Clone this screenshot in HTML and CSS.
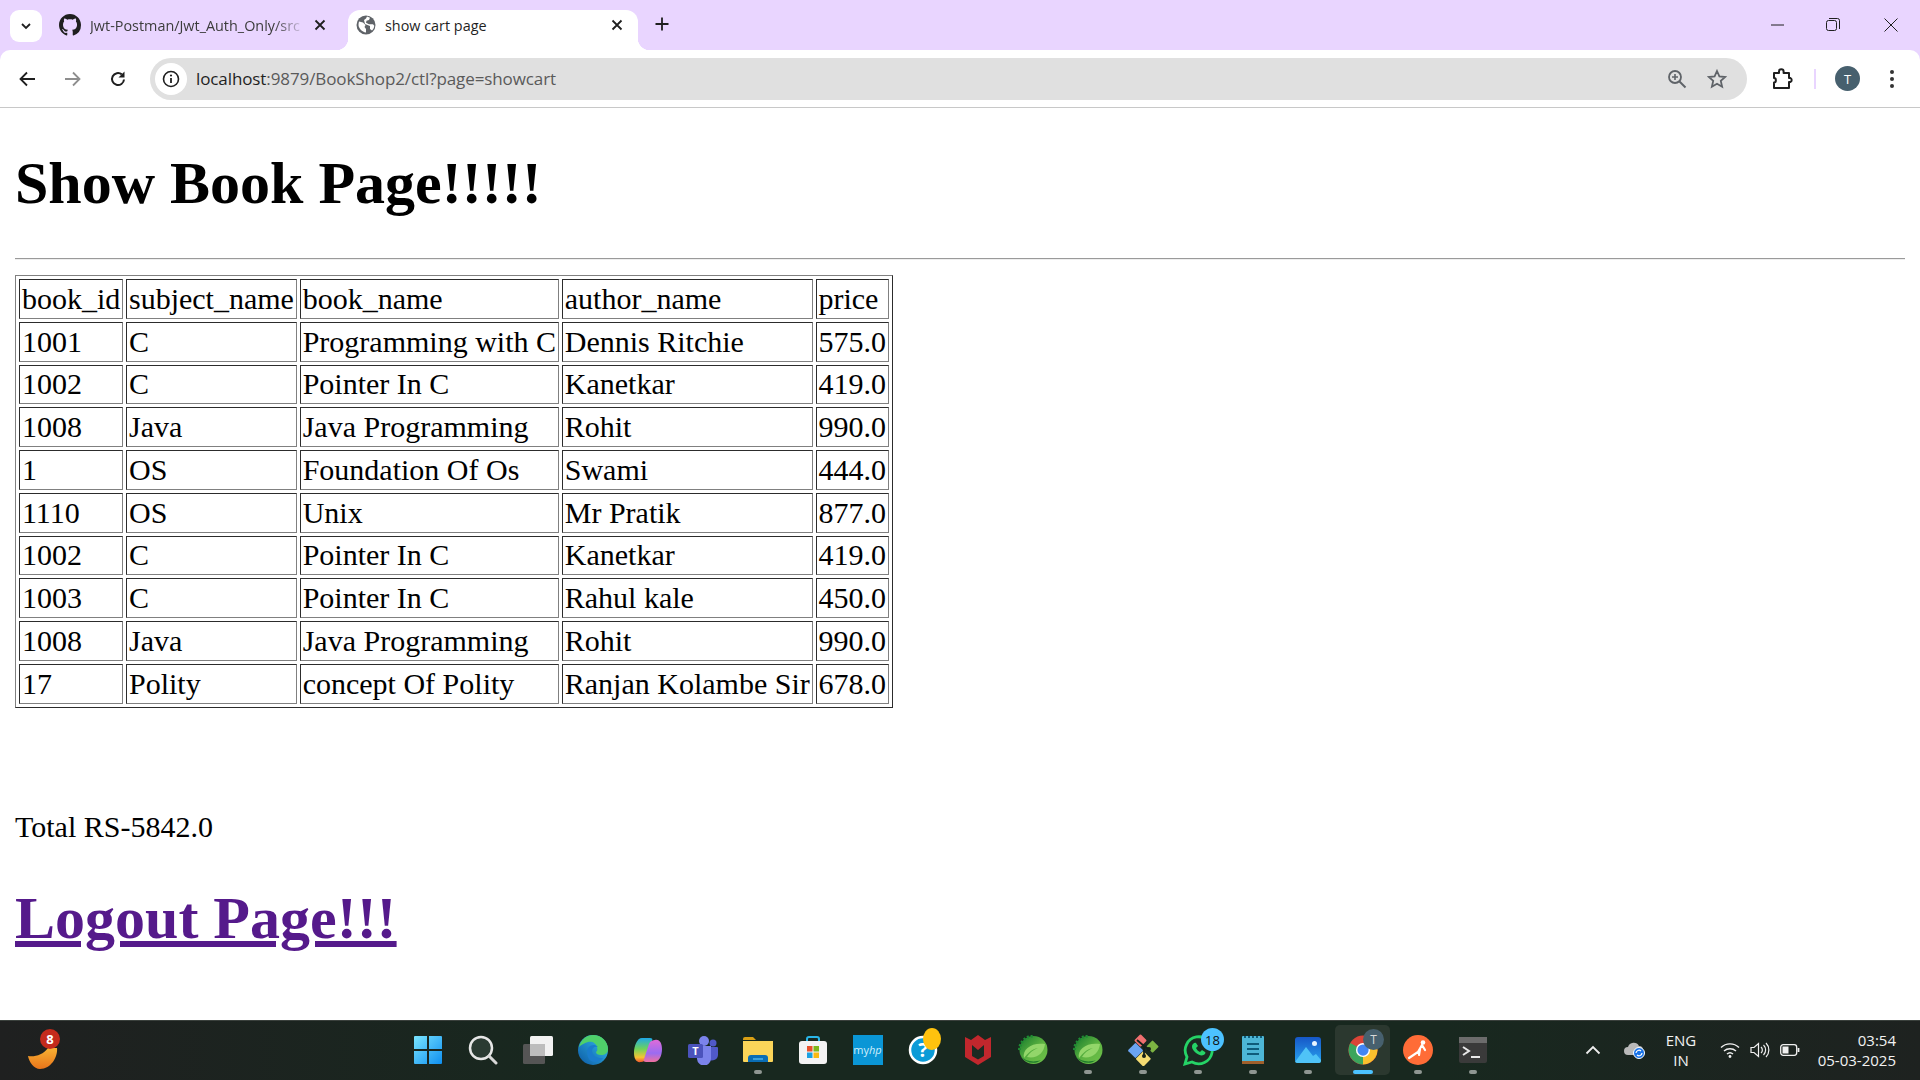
FILE: index.html
```html
<!DOCTYPE html>
<html>
    <head>
        <meta charset="UTF-8">
        <title>show cart page</title>
        <link rel="stylesheet" href="styles.css">
    </head>
    <body>
        <div class="tabstrip">
            <div class="tab-search"><svg width="14" height="14" viewBox="0 0 14 14"><path d="M3 5l4 4 4-4" fill="none" stroke="#1f1f1f" stroke-width="1.8"/></svg></div>
            <div class="tab inactive">
                <svg class="favicon" width="22" height="22" viewBox="0 0 16 16"><path fill="#1f1f1f" d="M8 0C3.58 0 0 3.58 0 8c0 3.54 2.29 6.53 5.47 7.59.4.07.55-.17.55-.38 0-.19-.01-.82-.01-1.49-2.01.37-2.53-.49-2.69-.94-.09-.23-.48-.94-.82-1.13-.28-.15-.68-.52-.01-.53.63-.01 1.08.58 1.23.82.72 1.21 1.87.87 2.33.66.07-.52.28-.87.51-1.07-1.78-.2-3.64-.89-3.64-3.95 0-.87.31-1.59.82-2.15-.08-.2-.36-1.02.08-2.12 0 0 .67-.21 2.2.82.64-.18 1.32-.27 2-.27s1.36.09 2 .27c1.53-1.04 2.2-.82 2.2-.82.44 1.1.16 1.92.08 2.12.51.56.82 1.27.82 2.15 0 3.07-1.87 3.75-3.65 3.95.29.25.54.73.54 1.48 0 1.07-.01 1.93-.01 2.2 0 .21.15.46.55.38A8.01 8.01 0 0 0 16 8c0-4.42-3.58-8-8-8z"/></svg>
                <span class="tab-title fade">Jwt-Postman/Jwt_Auth_Only/src</span>
                <svg class="tab-close" width="12" height="12" viewBox="0 0 12 12"><path d="M1.5 1.5l9 9M10.5 1.5l-9 9" stroke="#1f1f1f" stroke-width="1.8"/></svg>
            </div>
            <div class="tab active">
                <svg class="favicon" width="20" height="20" viewBox="0 0 20 20"><circle cx="10" cy="10" r="9.5" fill="#5f6368"/><path fill="#fff" d="M3 6.5l4 1 2.5 2.5-1 2 1.500 2v3.500C6 17 2.500 13 2.500 10c0-1 .2-2.500.5-3.500zM11 1.500l3 1.200-1 2.300-2.500.8-.5 2 3 1.500h4l1.300 1.500c-.3 2-1 3.500-2.300 4.700l-2-1.500V11L9 9 8 5l2-1.500z"/></svg>
                <span class="tab-title">show cart page</span>
                <svg class="tab-close" width="12" height="12" viewBox="0 0 12 12"><path d="M1.5 1.5l9 9M10.5 1.5l-9 9" stroke="#1f1f1f" stroke-width="1.8"/></svg>
            </div>
            <svg class="new-tab" width="16" height="16" viewBox="0 0 16 16"><path d="M8 1.5v13M1.5 8h13" stroke="#1f1f1f" stroke-width="1.8"/></svg>
            <div class="window-controls">
                <svg width="14" height="14" viewBox="0 0 14 14"><path d="M0 7h13" stroke="#1f1f1f" stroke-width="1"/></svg>
                <svg width="14" height="14" viewBox="0 0 14 14"><rect x=".5" y="2.5" width="10" height="10" rx="2" fill="none" stroke="#1f1f1f"/><path d="M3 .5h8.500a2 2 0 0 1 2 2V11" fill="none" stroke="#1f1f1f"/></svg>
                <svg class="window-close" width="14" height="14" viewBox="0 0 14 14"><path d="M.5.5l13 13M13.500.5l-13 13" stroke="#1f1f1f" stroke-width="1"/></svg>
            </div>
        </div>

        <div class="toolbar">
            <div class="nav-buttons">
                <svg width="18" height="18" viewBox="0 0 18 18"><path d="M17 9H3M9 2.500L2.500 9 9 15.500" fill="none" stroke="#1f1f1f" stroke-width="1.8"/></svg>
                <svg width="18" height="18" viewBox="0 0 18 18"><path d="M1 9h14M9 2.500L15.500 9 9 15.500" fill="none" stroke="#8e8e8e" stroke-width="1.8"/></svg>
                <svg class="reload" width="18" height="18" viewBox="0 0 18 18"><path d="M15 9.500A6 6 0 1 1 12.800 4.400" fill="none" stroke="#1f1f1f" stroke-width="2"/><path d="M15.500 1.500v6h-6z" fill="#1f1f1f"/></svg>
            </div>
            <div class="omnibox">
                <div class="site-info"><svg width="18" height="18" viewBox="0 0 18 18"><circle cx="9" cy="9" r="7.5" fill="none" stroke="#1f1f1f" stroke-width="1.6"/><path d="M9 8v5" stroke="#1f1f1f" stroke-width="1.8"/><circle cx="9" cy="5.5" r="1.1" fill="#1f1f1f"/></svg></div>
                <div class="url"><span class="host">localhost</span>:9879/BookShop2/ctl?page=showcart</div>
                <svg class="omni-icon" width="20" height="20" viewBox="0 0 20 20"><circle cx="8" cy="8" r="6" fill="none" stroke="#5f6368" stroke-width="1.8"/><path d="M12.500 12.500l6 6" stroke="#5f6368" stroke-width="2"/><path d="M8 5v6M5 8h6" stroke="#5f6368" stroke-width="1.6"/></svg>
                <svg class="omni-icon" width="20" height="20" viewBox="0 0 20 20"><path d="M10 2l2.400 5.400 5.800.6-4.400 3.900 1.300 5.800-5.100-3-5.100 3 1.300-5.800L1.800 8l5.800-.6z" fill="none" stroke="#5f6368" stroke-width="1.8"/></svg>
            </div>
            <svg class="ext-icon" width="22" height="22" viewBox="0 0 22 22"><path d="M3 5h5V3.500a2.300 2.300 0 0 1 4.600 0V5H18v5h1.500a2.300 2.300 0 0 1 0 4H18v6H3v-5.500c2.500 0 2.500-4.500 0-4.500z" fill="none" stroke="#1f1f1f" stroke-width="2" stroke-linejoin="round"/></svg>
            <div class="toolbar-divider"></div>
            <div class="avatar">T</div>
            <svg class="menu-icon" width="6" height="20" viewBox="0 0 6 20"><circle cx="3" cy="3" r="2" fill="#333"/><circle cx="3" cy="10" r="2" fill="#333"/><circle cx="3" cy="17" r="2" fill="#333"/></svg>
        </div>

        <div class="page">
            <h1>Show Book Page!!!!!</h1>
            <hr>
            <table class="cart" border="1">
                <tr><td>book_id</td><td>subject_name</td><td>book_name</td><td>author_name</td><td>price</td></tr>
                <tr><td>1001</td><td>C</td><td>Programming with C</td><td>Dennis Ritchie</td><td>575.0</td></tr>
                <tr><td>1002</td><td>C</td><td>Pointer In C</td><td>Kanetkar</td><td>419.0</td></tr>
                <tr><td>1008</td><td>Java</td><td>Java Programming</td><td>Rohit</td><td>990.0</td></tr>
                <tr><td>1</td><td>OS</td><td>Foundation Of Os</td><td>Swami</td><td>444.0</td></tr>
                <tr><td>1110</td><td>OS</td><td>Unix</td><td>Mr Pratik</td><td>877.0</td></tr>
                <tr><td>1002</td><td>C</td><td>Pointer In C</td><td>Kanetkar</td><td>419.0</td></tr>
                <tr><td>1003</td><td>C</td><td>Pointer In C</td><td>Rahul kale</td><td>450.0</td></tr>
                <tr><td>1008</td><td>Java</td><td>Java Programming</td><td>Rohit</td><td>990.0</td></tr>
                <tr><td>17</td><td>Polity</td><td>concept Of Polity</td><td>Ranjan Kolambe Sir</td><td>678.0</td></tr>
            </table>
            <p class="total">Total RS-5842.0</p>
            <h1><a href="#">Logout Page!!!</a></h1>
        </div>

        <div class="taskbar">
            <div class="task-left">
                <div class="task-item">
                    <svg width="30" height="22" viewBox="0 0 30 22"><defs><linearGradient id="fx" x1="0" y1="0" x2="0" y2="1"><stop offset="0" stop-color="#f9b233"/><stop offset="1" stop-color="#e8741a"/></linearGradient></defs><path d="M0 8c7 1 15-1 20-8h9c1 9-6 21-17 21C6 21 1 14 0 8z" fill="url(#fx)"/></svg>
                    <span class="badge red">8</span>
                </div>
            </div>
            <div class="task-center">
                <div class="task-item"><svg width="30" height="30" viewBox="0 0 30 30"><defs><linearGradient id="win" x1="0" y1="0" x2="1" y2="1"><stop offset="0" stop-color="#7ae5ff"/><stop offset="1" stop-color="#0f8ff0"/></linearGradient></defs><path fill="url(#win)" d="M1 2a1 1 0 0 1 1-1h12v13H1zM16 1h12a1 1 0 0 1 1 1v12H16zM1 16h13v13H2a1 1 0 0 1-1-1zM16 16h13v12a1 1 0 0 1-1 1H16z"/></svg></div>
                <div class="task-item"><svg width="30" height="30" viewBox="0 0 30 30"><circle cx="13" cy="13" r="11" fill="#2a3a32" stroke="#e6e6e6" stroke-width="2.5"/><path d="M21 21l7 7" stroke="#d8d8d8" stroke-width="3" stroke-linecap="round"/></svg></div>
                <div class="task-item"><svg width="32" height="30" viewBox="0 0 32 30"><rect x="1" y="9" width="22" height="20" rx="1.5" fill="#555"/><rect x="8" y="1" width="23" height="20" rx="1.5" fill="#f2f2f2"/><rect x="8" y="9" width="15" height="12" fill="#bdbdbd"/></svg></div>
                <div class="task-item"><svg width="32" height="32" viewBox="0 0 32 32"><defs><linearGradient id="edge" x1="0" y1="1" x2="1" y2="0"><stop offset="0" stop-color="#0c59a4"/><stop offset="1" stop-color="#35c1f1"/></linearGradient></defs><circle cx="16" cy="16" r="15" fill="url(#edge)"/><path d="M2 13C4 5 10 1 16 1c8 0 15 6 15 14 0 4-3 6-7 6-3 0-5-1-5-3 1-1 2-2 1-5-1-4-5-6-9-5-4 1-7 3-9 5z" fill="#4fd06a"/><path d="M10 18c0-4 3-7 7-7 2 0 3 1 4 2-2-1-6 0-6 4 0 4 5 8 11 7-3 4-8 5-12 3-3-2-4-6-4-9z" fill="#1a7ccc"/></svg></div>
                <div class="task-item"><svg width="30" height="26" viewBox="0 0 30 26"><defs><linearGradient id="co1" x1="0" y1="0" x2="0" y2="1"><stop offset="0" stop-color="#1fa8e8"/><stop offset=".45" stop-color="#6fd35a"/><stop offset=".8" stop-color="#f7c433"/><stop offset="1" stop-color="#f0562f"/></linearGradient><linearGradient id="co2" x1="0" y1="0" x2="0" y2="1"><stop offset="0" stop-color="#e06bd8"/><stop offset=".6" stop-color="#9a6cf2"/><stop offset="1" stop-color="#f0709f"/></linearGradient></defs><path d="M9 1h8c2 0 3 1 2 3l-6 17c-1 3-3 4-5 4-5 1-7-4-7-9C1 9 4 1 9 1z" fill="url(#co1)"/><path d="M21 25h-8c-2 0-3-1-2-3l5-15c1-3 4-4 6-4 5-1 7 4 7 9 0 7-3 13-8 13z" fill="url(#co2)"/></svg></div>
                <div class="task-item"><svg width="32" height="30" viewBox="0 0 32 30"><circle cx="17" cy="6" r="5" fill="#7b83eb"/><circle cx="26" cy="8" r="3.5" fill="#5059c9"/><path d="M21 12h9a1 1 0 0 1 1 1v7a6 6 0 0 1-10 4z" fill="#5059c9"/><path d="M9 11h15v12a7 7 0 0 1-14 1z" fill="#7b83eb"/><rect x="1" y="9" width="15" height="14" rx="1.5" fill="#4b53bc"/><text x="8.5" y="20" class="teams-t">T</text></svg></div>
                <div class="task-item running"><svg width="32" height="30" viewBox="0 0 32 30"><path d="M1 4a2 2 0 0 1 2-2h8l3 3h-13z" fill="#d9a015"/><path d="M1 6h30v20a1 1 0 0 1-1 1H2a1 1 0 0 1-1-1z" fill="#fbd559"/><path d="M6 27v-4a3 3 0 0 1 3-3h14a3 3 0 0 1 3 3v4z" fill="#0a6db5"/><path d="M11 24h10" stroke="#4db3ea" stroke-width="1.5"/></svg></div>
                <div class="task-item"><svg width="30" height="30" viewBox="0 0 30 30"><path d="M9 7V4a2 2 0 0 1 2-2h8a2 2 0 0 1 2 2v3" fill="none" stroke="#29b6e8" stroke-width="2"/><rect x="1" y="6" width="28" height="23" rx="3" fill="#f3f3f3"/><rect x="9" y="11" width="5.5" height="5.5" fill="#e8512b"/><rect x="15.5" y="11" width="5.5" height="5.5" fill="#7db81c"/><rect x="9" y="17.5" width="5.5" height="5.5" fill="#1ba1e2"/><rect x="15.5" y="17.5" width="5.5" height="5.5" fill="#fbb911"/></svg></div>
                <div class="task-item"><div class="myhp">my<i>hp</i></div></div>
                <div class="task-item"><svg width="30" height="30" viewBox="0 0 30 30"><circle cx="15" cy="15" r="13" fill="#0b9bd7" stroke="#fff" stroke-width="2.5"/><text x="15" y="22" class="help-q">?</text></svg><span class="dot-badge"></span></div>
                <div class="task-item"><svg width="28" height="32" viewBox="0 0 28 32"><path d="M1 3l6 3 7-5 7 5 6-3v20l-13 8-13-8z" fill="#c1272d"/><path d="M8 11l6 5 6-5v11l-6 3.5L8 22z" fill="#1b2a22"/></svg></div>
                <div class="task-item"><svg width="30" height="30" viewBox="0 0 30 30"><defs><linearGradient id="spr" x1="0" y1="0" x2="1" y2="1"><stop offset="0" stop-color="#157a2c"/><stop offset=".55" stop-color="#5eb441"/><stop offset="1" stop-color="#6fc24a"/></linearGradient></defs><circle cx="15.5" cy="15" r="14" fill="url(#spr)"/><path d="M1.500 15A14 14 0 0 1 15.500 1" fill="none" stroke="#1f8a33" stroke-width="3" stroke-dasharray="2 1.800"/><path d="M6 23C4 14 14 7 27 9c-1 9-8 15-18 13 2-4 6-7 11-9-6 1-10 5-14 10z" fill="#93d66a"/><path d="M3 22c5 4 12 6 20 3-6 5-15 3-20-3z" fill="#1f7a2c"/></svg></div>
                <div class="task-item running"><svg width="30" height="30" viewBox="0 0 30 30"><circle cx="15.5" cy="15" r="14" fill="url(#spr)"/><path d="M1.500 15A14 14 0 0 1 15.500 1" fill="none" stroke="#1f8a33" stroke-width="3" stroke-dasharray="2 1.800"/><path d="M6 23C4 14 14 7 27 9c-1 9-8 15-18 13 2-4 6-7 11-9-6 1-10 5-14 10z" fill="#93d66a"/><path d="M3 22c5 4 12 6 20 3-6 5-15 3-20-3z" fill="#1f7a2c"/></svg></div>
                <div class="task-item running"><svg width="32" height="32" viewBox="0 0 32 32"><rect x="9" y="2" width="9" height="9" rx="1" transform="rotate(45 13.500 6.500)" fill="#ef6f6f"/><rect x="19" y="6" width="9" height="9" rx="1" transform="rotate(45 22 14)" fill="#7cb342"/><rect x="3" y="11" width="11" height="11" rx="1" transform="rotate(45 8.500 16.500)" fill="#6ba4f2"/><rect x="11" y="19" width="11" height="11" rx="1" transform="rotate(45 16 24.500)" fill="#f5dc72"/><path d="M10 6l7 6v10M17 12l5 3" fill="none" stroke="#15201a" stroke-width="1.800"/><circle cx="17" cy="22" r="2" fill="#15201a"/><circle cx="22" cy="15" r="2" fill="#15201a"/></svg></div>
                <div class="task-item running"><svg width="32" height="32" viewBox="0 0 32 32"><path d="M3 30l2-7a13.5 13.5 0 1 1 5 5z" fill="#1b2a22" stroke="#25d366" stroke-width="2.8"/><path d="M11 10c-2 2-1 6 3 9s7 3 9 1c.5-1 .5-2 0-2l-3-2-2 2c-2-1-3-2-4-4l2-2-2-3c-1-.5-2 0-3 1z" fill="#25d366"/></svg><span class="badge blue">18</span></div>
                <div class="task-item running"><svg width="24" height="32" viewBox="0 0 24 32"><rect x="1" y="2" width="22" height="28" rx="1" fill="#4db6d6"/><rect x="1" y="27" width="22" height="3" fill="#a0602c"/><path d="M6 10h12M6 15h12M6 20h12" stroke="#0f5c7a" stroke-width="2"/><path d="M3 3h18" stroke="#0f5c7a" stroke-width="2" stroke-dasharray="2 2"/></svg></div>
                <div class="task-item running"><svg width="28" height="28" viewBox="0 0 28 28"><defs><linearGradient id="ph" x1="0" y1="0" x2="0" y2="1"><stop offset="0" stop-color="#1657c7"/><stop offset="1" stop-color="#29a3ee"/></linearGradient></defs><rect x="1" y="1" width="26" height="26" rx="3" fill="url(#ph)"/><path d="M1 26L12 11l7 9 3-2 5 6v1a2 2 0 0 1-2 2H3z" fill="#4fc3f7"/><circle cx="20.5" cy="7.5" r="2.5" fill="#e8f4ff"/></svg></div>
                <div class="task-item focused"><svg width="30" height="30" viewBox="0 0 32 32"><circle cx="16" cy="16" r="15.500" fill="#db4437"/><path d="M16 16L29.500 8.500A15.500 15.500 0 0 1 16 31.500z" fill="#fbc02d"/><path d="M16 16L16 31.500A15.500 15.500 0 0 1 2.500 8.500z" fill="#3ba55c"/><circle cx="16" cy="16" r="7.500" fill="#fff"/><circle cx="16" cy="16" r="6" fill="#4285f4"/></svg><span class="badge profile">T</span></div>
                <div class="task-item running"><svg width="30" height="30" viewBox="0 0 30 30"><circle cx="15" cy="15" r="15" fill="#ff6c37"/><circle cx="20" cy="7.500" r="2.300" fill="#fff"/><path d="M19 10l-4 7-9 6M19 10l3 5M17 14l-1 6" fill="none" stroke="#fff" stroke-width="2.200" stroke-linecap="round"/></svg></div>
                <div class="task-item running"><svg width="30" height="28" viewBox="0 0 30 28"><rect x="1" y="1" width="28" height="26" rx="2" fill="#3a3a3a"/><rect x="1" y="1" width="28" height="6" fill="#6c6c6c"/><path d="M5 11l6 4-6 4" fill="none" stroke="#e8e8e8" stroke-width="2"/><path d="M13 21h9" stroke="#e8e8e8" stroke-width="2"/></svg></div>
            </div>
            <div class="tray">
                <svg class="tray-chevron" width="16" height="10" viewBox="0 0 16 10"><path d="M1.500 8.500L8 2l6.500 6.500" fill="none" stroke="#eee" stroke-width="1.8"/></svg>
                <svg class="tray-cloud" width="22" height="18" viewBox="0 0 22 18"><path d="M4 14a4 4 0 0 1 0-8 6 6 0 0 1 11-1 4 4 0 0 1 4 4v5z" fill="#b9b9b9"/><circle cx="15" cy="12" r="5.500" fill="#1a73e8" stroke="#fff"/><path d="M12 12a3 3 0 0 1 5-2M18 12a3 3 0 0 1-5 2" fill="none" stroke="#fff" stroke-width="1.2"/></svg>
                <div class="lang">ENG<br>IN</div>
                <svg class="tray-wifi" width="20" height="16" viewBox="0 0 20 16"><path d="M1 5.500a13 13 0 0 1 18 0M4 9a9 9 0 0 1 12 0M7 12a4.500 4.500 0 0 1 6 0" fill="none" stroke="#f0f0f0" stroke-width="1.4"/><circle cx="10" cy="14.500" r="1.400" fill="#f0f0f0"/></svg>
                <svg class="tray-sound" width="20" height="16" viewBox="0 0 20 16"><path d="M1 5.500h3L8.500 1.500v13L4 10.500H1z" fill="none" stroke="#f0f0f0" stroke-width="1.2"/><path d="M11 5a4 4 0 0 1 0 6M13.500 3a7 7 0 0 1 0 10M16 1a10 10 0 0 1 0 14" fill="none" stroke="#f0f0f0" stroke-width="1.2"/></svg>
                <svg class="tray-battery" width="20" height="12" viewBox="0 0 20 12"><rect x=".7" y=".7" width="16" height="10.600" rx="2.500" fill="none" stroke="#f0f0f0" stroke-width="1.3"/><rect x="2.500" y="2.500" width="6" height="7" fill="#f0f0f0"/><path d="M18.500 4v4" stroke="#f0f0f0" stroke-width="1.8"/></svg>
                <div class="clock">03:54<br>05-03-2025</div>
            </div>
        </div>
    </body>
</html>
```

FILE: styles.css
```css
html, body {
    margin: 0;
    padding: 0;
}
body {
    width: 1920px;
    height: 1080px;
    overflow: hidden;
    display: flex;
    flex-direction: column;
    background-color: #e9d5ff;
    font-family: "Open Sans", "Noto Sans", sans-serif;
}

/* tab strip */
.tabstrip {
    height: 50px;
    flex-shrink: 0;
    display: flex;
    align-items: flex-end;
}
.tab-search {
    width: 32px;
    height: 32px;
    margin: 0 0 8px 10px;
    border-radius: 9px;
    background-color: white;
    display: flex;
    align-items: center;
    justify-content: center;
}
.tab {
    height: 40px;
    display: flex;
    align-items: center;
    font-size: 14.4px;
    box-sizing: border-box;
    padding-bottom: 10px;
    position: relative;
    border-radius: 12px 12px 0 0;
    flex-shrink: 0;
}
.tab.inactive {
    width: 296px;
    margin-right: 10px;
    padding-left: 17px;
    padding-right: 12px;
    color: #3c3c3c;
}
.tab.active {
    width: 290px;
    padding-left: 8px;
    padding-right: 15px;
    background-color: white;
    color: #1f1f1f;
}
.tab.active::before,
.tab.active::after {
    content: "";
    position: absolute;
    bottom: 0;
    width: 12px;
    height: 12px;
}
.tab.active::before {
    left: -12px;
    background: radial-gradient(circle at 0 0, transparent 12px, white 12.5px);
}
.tab.active::after {
    right: -12px;
    background: radial-gradient(circle at 100% 0, transparent 12px, white 12.5px);
}
.favicon {
    flex-shrink: 0;
    margin-right: 9px;
}
.tab-title {
    flex: 1;
    white-space: nowrap;
    overflow: hidden;
}
.tab-title.fade {
    -webkit-mask-image: linear-gradient(to right, black 85%, transparent);
    mask-image: linear-gradient(to right, black 85%, transparent);
}
.tab-close {
    flex-shrink: 0;
    margin-left: 8px;
}
.new-tab {
    margin: 0 0 18px 16px;
}
.window-controls {
    margin-left: auto;
    display: flex;
    gap: 41px;
    align-items: center;
    align-self: flex-start;
    height: 49px;
    padding-right: 22px;
}
.window-close {
    margin-left: 3px;
}

/* toolbar */
.toolbar {
    height: 58px;
    box-sizing: border-box;
    flex-shrink: 0;
    display: flex;
    align-items: center;
    background-color: white;
    border-bottom: 1px solid #c8c8c8;
    border-radius: 10px 10px 0 0;
}
.nav-buttons {
    display: flex;
    gap: 28px;
    padding-left: 18px;
    width: 132px;
    box-sizing: border-box;
    flex-shrink: 0;
}
.reload {
    margin-left: -1px;
}
.omnibox {
    width: 1597px;
    height: 42px;
    margin-left: 18px;
    border-radius: 21px;
    background-color: #e0e0e0;
    display: flex;
    align-items: center;
    flex-shrink: 0;
}
.site-info {
    width: 32px;
    height: 32px;
    margin-left: 5px;
    border-radius: 50%;
    background-color: white;
    display: flex;
    align-items: center;
    justify-content: center;
}
.url {
    flex: 1;
    margin-left: 9px;
    font-size: 17px;
    color: #5a5a5a;
    letter-spacing: -0.1px;
}
.url .host {
    color: #1f1f1f;
}
.omni-icon {
    margin-right: 20px;
}
.ext-icon {
    margin-left: 24px;
}
.toolbar-divider {
    width: 2px;
    height: 20px;
    margin-left: 21px;
    background-color: #e9d5ff;
}
.avatar {
    width: 25px;
    height: 25px;
    margin-left: 19px;
    border-radius: 50%;
    background-color: #47606e;
    color: white;
    font-size: 13px;
    display: flex;
    align-items: center;
    justify-content: center;
}
.menu-icon {
    margin-left: 29px;
}

/* page content, sizes are the browser defaults at 187.5% zoom */
.page {
    flex: 1;
    min-height: 0;
    padding: 0 15px;
    overflow: hidden;
    background-color: white;
    color: black;
    font-family: "Liberation Serif", "Times New Roman", serif;
    font-size: 30px;
}
.page h1 {
    font-size: 60px;
    margin: 40px 0;
}
.page h1:first-child {
    margin-top: 41px;
}
.page a {
    color: #551a8b;
}
.page hr {
    height: 0;
    margin: 15px 0;
    border: 0;
    border-top: 1px solid #9a9a9a;
    border-bottom: 1px solid #eeeeee;
}
.cart {
    border-spacing: 3px;
}
.cart td {
    padding: 1.875px;
    line-height: 34px;
}
.total {
    margin: 102px 0 0 0;
}

/* taskbar */
.taskbar {
    height: 60px;
    flex-shrink: 0;
    display: flex;
    align-items: center;
    background: linear-gradient(to right, #1f2020 0%, #18281f 30%, #18281f 75%, #1e2220 100%);
    border-top: 1px solid #3a403c;
    padding-bottom: 1px;
    box-sizing: border-box;
    color: #f2f2f2;
}
.task-left {
    width: 400px;
    flex-shrink: 0;
    padding-left: 28px;
    box-sizing: border-box;
    display: flex;
}
.task-center {
    display: flex;
    flex-shrink: 0;
}
.task-item {
    width: 55px;
    height: 50px;
    position: relative;
    display: flex;
    align-items: center;
    justify-content: center;
    border-radius: 5px;
    box-sizing: border-box;
}
.task-left .task-item {
    width: 30px;
    padding-top: 17px;
}
.task-item.running::after,
.task-item.focused::after {
    content: "";
    position: absolute;
    bottom: 1px;
    left: 50%;
    width: 8px;
    height: 4px;
    margin-left: -4px;
    border-radius: 2px;
    background-color: #8f9692;
}
.task-item.focused {
    background-color: #2b382f;
}
.task-item.focused::after {
    width: 20px;
    margin-left: -10px;
    background-color: #4cc2ff;
}
.badge {
    position: absolute;
    border-radius: 50%;
    display: flex;
    align-items: center;
    justify-content: center;
    font-size: 12px;
    color: white;
}
.badge.red {
    top: 4px;
    left: 12px;
    width: 20px;
    height: 20px;
    background-color: #c42b1c;
    font-size: 13px;
    font-weight: bold;
}
.badge.blue {
    top: 3px;
    left: 31px;
    width: 23px;
    height: 23px;
    background-color: #4cc2ff;
    color: #101010;
    font-size: 13px;
}
.badge.profile {
    top: 4px;
    left: 28px;
    width: 21px;
    height: 21px;
    background-color: #47606e;
    color: #d8d8d8;
    font-size: 12px;
}
.dot-badge {
    position: absolute;
    top: 3px;
    left: 28px;
    width: 18px;
    height: 22px;
    border-radius: 50%;
    background-color: #ffc20e;
}
.myhp {
    width: 30px;
    height: 30px;
    background-color: #0a96d6;
    color: #cfeefb;
    font-size: 11px;
    line-height: 30px;
    text-align: center;
}
.teams-t {
    font-family: "Open Sans", sans-serif;
    font-size: 11px;
    font-weight: bold;
    fill: white;
    text-anchor: middle;
}
.help-q {
    font-family: "Open Sans", sans-serif;
    font-size: 20px;
    font-weight: bold;
    fill: white;
    text-anchor: middle;
}
.tray {
    flex: 1;
    display: flex;
    align-items: center;
    font-size: 15px;
    line-height: 20px;
    text-align: center;
}
.tray-chevron {
    margin-left: 85px;
}
.tray-cloud {
    margin-left: 23px;
}
.lang {
    margin-left: 16px;
    width: 38px;
}
.tray-wifi {
    margin-left: 20px;
}
.tray-sound {
    margin-left: 10px;
}
.tray-battery {
    margin-left: 10px;
}
.clock {
    margin-left: auto;
    margin-right: 24px;
    text-align: right;
}
```
